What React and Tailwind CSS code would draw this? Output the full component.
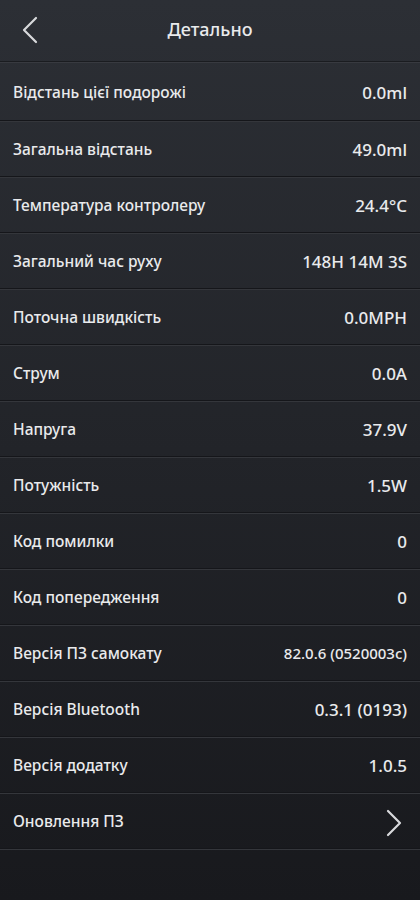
import React from "react";

const rows = [
  { label: "Відстань цієї подорожі", value: "0.0ml" },
  { label: "Загальна відстань", value: "49.0ml" },
  { label: "Температура контролеру", value: "24.4°C" },
  { label: "Загальний час руху", value: "148H 14M 3S" },
  { label: "Поточна швидкість", value: "0.0MPH" },
  { label: "Струм", value: "0.0A" },
  { label: "Напруга", value: "37.9V" },
  { label: "Потужність", value: "1.5W" },
  { label: "Код помилки", value: "0" },
  { label: "Код попередження", value: "0" },
  { label: "Версія ПЗ самокату", value: "82.0.6 (0520003c)", small: true },
  { label: "Версія Bluetooth", value: "0.3.1 (0193)" },
  { label: "Версія додатку", value: "1.0.5" },
];

const Chevron = ({ dir = "right" }) => (
  <svg width="18" height="28" viewBox="0 0 18 28" fill="none">
    <path
      d={dir === "left" ? "M15 2 L3 14 L15 26" : "M3 2 L15 14 L3 26"}
      stroke="#d8d9dc"
      strokeWidth="2.2"
      strokeLinecap="round"
      strokeLinejoin="round"
    />
  </svg>
);

const Row = ({ first, children }) => (
  <div
    className={`${
      first ? "h-[59px] pt-[4px]" : "h-[56px] pt-[2px]"
    } flex items-center justify-between px-[13px] border-b border-[#15161a] shadow-[0_1px_0_#34363b]`}
  >
    {children}
  </div>
);

export default function App() {
  return (
    <div
      className="min-h-[900px] w-full bg-gradient-to-b from-[#2c2f35] via-[#222429] to-[#18191d] text-[#e9eaec]"
      style={{ fontFamily: '"Noto Sans", "Open Sans", sans-serif' }}
    >
      {/* Header */}
      <div className="h-[62px] relative flex items-center justify-center border-b border-[#1a1c20] shadow-[0_1px_0_#383a40]">
        <button className="absolute left-[21px] top-[16px]">
          <Chevron dir="left" />
        </button>
        <h1 className="text-[18px] font-medium pb-[2px]">Детально</h1>
      </div>

      {rows.map((r, i) => (
        <Row key={r.label} first={i === 0}>
          <span className="text-[15.5px] font-medium">{r.label}</span>
          <span
            className={
              r.small ? "text-[15px] font-medium" : "text-[17px] font-medium"
            }
          >
            {r.value}
          </span>
        </Row>
      ))}

      <Row>
        <span className="text-[15.5px] font-medium">Оновлення ПЗ</span>
        <span className="pr-[4px] pt-[2px]">
          <Chevron />
        </span>
      </Row>
    </div>
  );
}
